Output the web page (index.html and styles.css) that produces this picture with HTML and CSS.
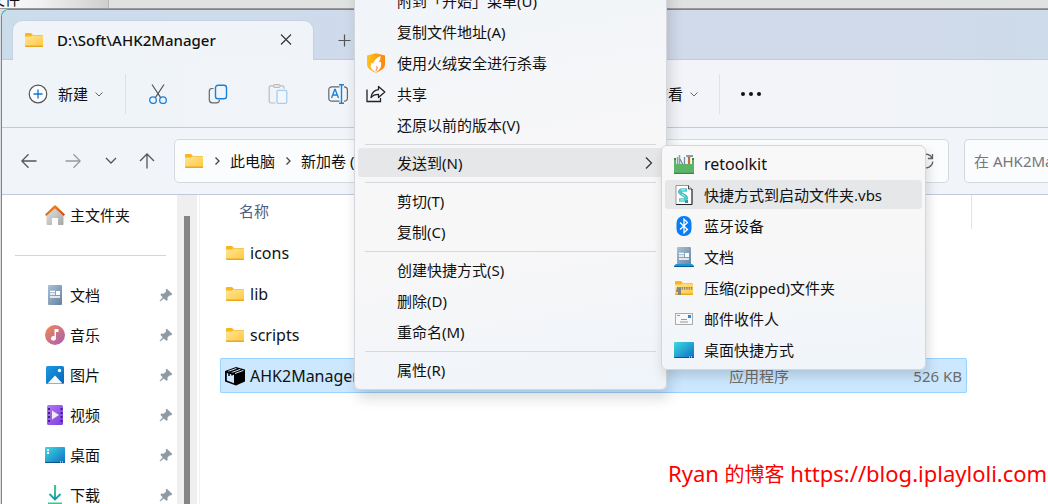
FILE: index.html
```html
<!DOCTYPE html>
<html lang="zh-CN">
<head>
<meta charset="utf-8">
<title>AHK2Manager</title>
<link rel="stylesheet" href="styles.css">
</head>
<body>
<svg class="defs" aria-hidden="true">
  <defs>
    <linearGradient id="gFolder" x1="0" y1="0" x2="1" y2="1"><stop offset="0" stop-color="#ffe59a"/><stop offset="1" stop-color="#ffc93e"/></linearGradient>
    <linearGradient id="gDoc" x1="0" y1="0" x2="1" y2="1"><stop offset="0" stop-color="#a9c1d9"/><stop offset="1" stop-color="#64819f"/></linearGradient>
    <linearGradient id="gDesk" x1="0" y1="0" x2="1" y2="1"><stop offset="0" stop-color="#3ddbe0"/><stop offset="1" stop-color="#0f6cc4"/></linearGradient>
    <linearGradient id="gMusic" x1="0" y1="0" x2="1" y2="1"><stop offset="0" stop-color="#f58a50"/><stop offset="1" stop-color="#a45cb8"/></linearGradient>
    <linearGradient id="gPic" x1="0" y1="0" x2="1" y2="1"><stop offset="0" stop-color="#189be6"/><stop offset="1" stop-color="#0a64b4"/></linearGradient>
    <linearGradient id="gVideo" x1="0" y1="0" x2="1" y2="1"><stop offset="0" stop-color="#b577f2"/><stop offset="1" stop-color="#7c3ee0"/></linearGradient>
    <linearGradient id="gHome" x1="0" y1="0" x2="1" y2="1"><stop offset="0" stop-color="#e4e4e4"/><stop offset="1" stop-color="#a6a6a6"/></linearGradient>
    <linearGradient id="gRoof" x1="0" y1="0" x2="1" y2="1"><stop offset="0" stop-color="#f79218"/><stop offset="1" stop-color="#d8410a"/></linearGradient>
    <linearGradient id="gDown" x1="0" y1="0" x2="0" y2="1"><stop offset="0" stop-color="#37c78c"/><stop offset="1" stop-color="#0f9aa0"/></linearGradient>
    <linearGradient id="gShield" x1="0" y1="0" x2="1" y2="0"><stop offset="0" stop-color="#ffc21c"/><stop offset="1" stop-color="#f98512"/></linearGradient>
    <symbol id="folder" viewBox="0 0 20 20">
      <path d="M1 4q0-1 1-1h5l2 2h-1v3H1z" fill="#f8b51c"/>
      <path d="M1 6.500h6L8.500 5H18q1 0 1 1v10q0 1-1 1H2q-1 0-1-1z" fill="url(#gFolder)"/>
      <path d="M1 16q0 1 1 1h16q1 0 1-1v-.4H1z" fill="#e8a820"/>
      <path d="M8.500 5H18q1 0 1 .6H8z" fill="#edb12b"/>
    </symbol>
    <symbol id="doc" viewBox="0 0 20 20">
      <rect x="3" width="14" height="20" rx="1" fill="url(#gDoc)"/>
      <path d="M5 6.500h5M5 9h5M5 12h10" stroke="#fff" stroke-width="1.300"/><rect x="11" y="6" width="4" height="4" fill="#fff"/>
    </symbol>
    <symbol id="desk" viewBox="0 0 20 20">
      <rect y="2" width="20" height="16" rx="1" fill="url(#gDesk)"/><path d="M0 17h20q0 1-1 1H1q-1 0-1-1z" fill="#075587"/>
      <path d="M15 17h1m1 0h1" stroke="#fff" stroke-width="1"/>
    </symbol>
    <symbol id="pin" viewBox="0 0 14 14">
      <path d="M7.800.7 13.300 6l-.8 1.300-2 .2-2 2 .1 2.700-1.300.6L4.700 10.500 1.200 13.500.5 12.900 3.700 9.300 1.500 6.900l.6-1.300 2.600.1 2.200-2 0-2.100z" fill="#8f9ba4"/>
    </symbol>
    <symbol id="down" viewBox="0 0 10 10"><path d="M1.500 3.500 5 7l3.500-3.500" fill="none" stroke="#666" stroke-width="1"/></symbol>
  </defs>
</svg>

<div class="desktop">
  <div class="backdrop">文件</div>

  <main class="window">
    <header class="titlebar">
      <div class="tab">
        <svg class="ico"><use href="#folder"/></svg>
        <span class="tab-name">D:\Soft\AHK2Manager</span>
        <button class="plain" aria-label="关闭"><svg class="s14" viewBox="0 0 14 14"><path d="m2 1.500 10 10M12 1.500l-10 10" stroke="#333" stroke-width="1.100"/></svg></button>
      </div>
      <button class="plain new-tab" aria-label="新标签"><svg class="s14" viewBox="0 0 14 14"><path d="M7.500 1.500v12M1.500 7.500h12" stroke="#555" stroke-width="1.200"/></svg></button>
    </header>

    <div class="toolbar">
      <button class="plain new">
        <svg class="ico" viewBox="0 0 20 20" fill="none"><circle cx="10" cy="10" r="8.800" stroke="#555" stroke-width="1.200" fill="#fafcfe"/><path d="M10 5.500v9M5.500 10h9" stroke="#0a74d0" stroke-width="1.300"/></svg>
        <span>新建</span>
        <svg class="s10"><use href="#down"/></svg>
      </button>
      <i class="rule"></i>
      <div class="tools">
        <button class="plain" aria-label="剪切"><svg class="ico" viewBox="0 0 20 20" fill="none"><path d="M4 0.500 12.800 13.800M16 .5 7.200 13.800" stroke="#555" stroke-width="1.200"/><circle cx="5" cy="16.200" r="3.300" stroke="#1a80d8" stroke-width="1.300"/><circle cx="15" cy="16.200" r="3.300" stroke="#1a80d8" stroke-width="1.300"/></svg></button>
        <button class="plain" aria-label="复制"><svg class="ico" viewBox="0 0 20 20" fill="none"><path d="M5.500 4.500H4Q1.300 4.500 1.300 7.500v8.300q0 3 3 3h4.200q2.800 0 3-2.800" stroke="#666" stroke-width="1.200"/><rect x="7.500" y="1.200" width="11" height="13.600" rx="2.600" stroke="#1a80d8" stroke-width="1.400" fill="#eef5fc"/></svg></button>
        <button class="plain" aria-label="粘贴"><svg class="ico" viewBox="0 0 20 20" fill="none"><path d="M5.500 1.800H3q-1.800 0-1.800 1.800v13.600Q1.200 19 3 19h4.500M12 1.800h2.200q1.800 0 1.800 1.800v1.200" stroke="#bbb" stroke-width="1.200"/><rect x="5.500" y=".6" width="6.500" height="2.800" rx="1.400" stroke="#bbb" stroke-width="1.100"/><rect x="9" y="6.300" width="9.800" height="13" rx="1.600" stroke="#a4cdef" stroke-width="1.300" fill="#f1f7fd"/></svg></button>
        <button class="plain" aria-label="重命名"><svg class="ico" viewBox="0 0 20 20" fill="none"><path d="M11.500 2.800H4Q.8 2.800.8 6v8q0 3.200 3.200 3.200h7.500M16 2.800q3.400 0 3.400 3.200v8q0 3.200-3.400 3.200" stroke="#666" stroke-width="1.200"/><path d="m3.500 14 3.300-8.500h.4L10.500 14M4.700 11h4.600" stroke="#1a80d8" stroke-width="1.300"/><path d="M11 .7h5M11 19.300h5M13.500.7v18.600" stroke="#1a80d8" stroke-width="1.400"/></svg></button>
      </div>
      <button class="plain view"><span>查看</span><svg class="s10"><use href="#down"/></svg></button>
      <i class="rule"></i>
      <button class="plain more" aria-label="更多"><svg class="ico" viewBox="0 0 20 20" fill="#111"><circle cx="2" cy="10" r="2"/><circle cx="10" cy="10" r="2"/><circle cx="18" cy="10" r="2"/></svg></button>
    </div>

    <nav class="navbar">
      <button class="plain" aria-label="后退"><svg class="s16" viewBox="0 0 16 16" fill="none" stroke="#555" stroke-width="1.300"><path d="M15.500 8H1M7.500 1.300.8 8l6.700 6.700"/></svg></button>
      <button class="plain" aria-label="前进"><svg class="s16" viewBox="0 0 16 16" fill="none" stroke="#999" stroke-width="1.300"><path d="M.5 8H15M8.500 1.300 15.200 8l-6.700 6.700"/></svg></button>
      <button class="plain recent" aria-label="最近"><svg class="s12" viewBox="0 0 12 12" fill="none" stroke="#555" stroke-width="1.300"><path d="m1 3 5 5 5-5"/></svg></button>
      <button class="plain" aria-label="上移"><svg class="s16" viewBox="0 0 16 16" fill="none" stroke="#555" stroke-width="1.300"><path d="M8 15.500V1M1 8l7-7 7 7"/></svg></button>
      <div class="address">
        <svg class="ico"><use href="#folder"/></svg>
        <svg class="s10" viewBox="0 0 10 10"><path d="m3.500 1.500 3.500 3.500-3.500 3.500" fill="none" stroke="#444" stroke-width="1.300"/></svg>
        <a href="#">此电脑</a>
        <svg class="s10" viewBox="0 0 10 10"><path d="m3.500 1.500 3.500 3.500-3.500 3.500" fill="none" stroke="#444" stroke-width="1.300"/></svg>
        <a href="#">新加卷 (</a>
        <button class="plain refresh" aria-label="刷新"><svg class="s16" viewBox="0 0 16 16" fill="none" stroke="#666" stroke-width="1.300"><path d="M14.500 1v4.500H10M14.300 5.500A6.800 6.800 0 1 0 14.800 8.500"/></svg></button>
      </div>
      <input class="search" type="text" aria-label="搜索" placeholder="在 AHK2Manager">
    </nav>

    <div class="content">
      <aside class="sidebar">
        <ul class="places">
          <li><svg class="ico" viewBox="0 0 20 20"><path d="M1.500 9 10 2l8.500 7v10q0 1-1 1H13v-7H7v7H2.500q-1 0-1-1z" fill="url(#gHome)"/><path d="M0 9.500 9 .8q1-.9 2 0l9 8.700-1.300 1.500L10 3.200 1.300 11z" fill="url(#gRoof)"/></svg><a href="#">主文件夹</a></li>
          <li><hr></li>
          <li><svg class="ico"><use href="#doc"/></svg><a href="#">文档</a><svg class="s14"><use href="#pin"/></svg></li>
          <li><svg class="ico" viewBox="0 0 20 20"><circle cx="10" cy="10" r="10" fill="url(#gMusic)"/><path d="M10 4h3.500v3H11v6.300a2.500 2.300 0 1 1-1.500-2.100V4z" fill="#fff"/></svg><a href="#">音乐</a><svg class="s14"><use href="#pin"/></svg></li>
          <li><svg class="ico" viewBox="0 0 20 20"><rect x="1" y="1" width="18" height="18" rx="1.500" fill="url(#gPic)"/><path d="M2.500 18.500 10 10.500l7.500 8z" fill="#f6faff"/><circle cx="14.500" cy="5.500" r="1.700" fill="#fff"/></svg><a href="#">图片</a><svg class="s14"><use href="#pin"/></svg></li>
          <li><svg class="ico" viewBox="0 0 20 20"><rect x="2" width="16" height="20" rx="1.500" fill="url(#gVideo)"/><path d="M4 3v15M16.500 3v15" stroke="#41208a" stroke-width="2" stroke-dasharray="2 2"/><path d="m7 5.500 7 4.500-7 4.500z" fill="#eee"/></svg><a href="#">视频</a><svg class="s14"><use href="#pin"/></svg></li>
          <li><svg class="ico" viewBox="0 0 20 20"><use href="#desk" width="20" height="20"/><path d="M2 4h2v2H2zM2 7h2v2H2z" fill="#fff"/></svg><a href="#">桌面</a><svg class="s14"><use href="#pin"/></svg></li>
          <li><svg class="ico" viewBox="0 0 20 20" fill="none"><path d="M10 0v14M4.500 9l5.500 5.500L15.500 9" stroke="url(#gDown)" stroke-width="1.800"/><path d="M10.200 0v6M3 18.500h14" stroke="#37c78c" stroke-width="1.800"/></svg><a href="#">下载</a><svg class="s14"><use href="#pin"/></svg></li>
        </ul>
        <div class="track"><div class="thumb"></div></div>
      </aside>

      <section class="files">
        <table>
          <thead><tr><th class="c-name">名称</th><th class="c-type"></th><th class="c-size"></th><th class="c-end"></th></tr></thead>
          <tbody>
            <tr><td><span class="file"><svg class="ico"><use href="#folder"/></svg>icons</span></td><td></td><td></td></tr>
            <tr><td><span class="file"><svg class="ico"><use href="#folder"/></svg>lib</span></td><td></td><td></td></tr>
            <tr><td><span class="file"><svg class="ico"><use href="#folder"/></svg>scripts</span></td><td></td><td></td></tr>
            <tr class="selected"><td><span class="file"><svg class="ico" viewBox="0 0 20 20"><path d="M0 5 11 1l9 2.500v12L11 19.500 0 15.500z" fill="#000"/><path d="M1.800 7 9 9v8.300l-7.200-2.800z" fill="#cce8ff"/><path d="M3 5.500 11.500 2.400M6.500 6.600 15.500 3.300M10 7.500 18.500 4.400" stroke="#cce8ff" stroke-width="1"/><path d="M4 5.500v4.500M7 6.500v3" stroke="#000" stroke-width="1.500"/></svg>AHK2Manager</span></td><td class="meta">应用程序</td><td class="meta size">526 KB</td></tr>
          </tbody>
        </table>
      </section>
    </div>
  </main>

  <p class="watermark">Ryan <span>的博客</span> https://blog.iplayloli.com</p>

  <div class="menu context" role="menu">
    <button role="menuitem">附到「开始」菜单(U)</button>
    <button role="menuitem">复制文件地址(A)</button>
    <button role="menuitem"><svg class="ico" viewBox="0 0 20 20"><path d="M1 2.500 10 .3l9 2.200v9q0 5-9 8.300Q1 16.500 1 11.500z" fill="url(#gShield)"/><path d="M14.500 3q.5 3.500-2 6.500l2-1q3 6-4.500 10.800Q2.500 16 5.500 9.500l1.700 1.300Q8 6 14.500 3z" fill="#fff"/><path d="M10.500 13q1.500 2.500-.7 5" fill="none" stroke="#f5a070" stroke-width="1.200"/></svg>使用火绒安全进行杀毒</button>
    <button role="menuitem"><svg class="ico" viewBox="0 0 20 20" fill="none" stroke="#222" stroke-width="1.300"><path d="M1 5.500V17.500h13.500v-3.500"/><path d="M12.500 2.500 18.800 8l-6.300 5.500v-3.200q-5 0-7.500 3.200 1-7 7.500-7.800z" stroke-linejoin="round"/></svg>共享</button>
    <button role="menuitem">还原以前的版本(V)</button>
    <hr>
    <button role="menuitem" class="active">发送到(N)<svg class="arrow" viewBox="0 0 14 14"><path d="m5 1.500 5.500 5.500L5 12.500" fill="none" stroke="#333" stroke-width="1.200"/></svg></button>
    <hr>
    <button role="menuitem">剪切(T)</button>
    <button role="menuitem">复制(C)</button>
    <hr>
    <button role="menuitem">创建快捷方式(S)</button>
    <button role="menuitem">删除(D)</button>
    <button role="menuitem">重命名(M)</button>
    <hr>
    <button role="menuitem">属性(R)</button>
  </div>

  <div class="menu submenu" role="menu">
    <button role="menuitem" class="latin"><svg class="ico" viewBox="0 0 20 20"><path d="M3.500 3v9M5.500 1v10" stroke="#8d9dad" stroke-width="1.500"/><path d="m6 5 3 6M10.500 3v8" stroke="#6b8aa5" stroke-width="1.300"/><path d="M12 1h7v2h-2l-2 1-3-1.500z" fill="#8b9aa6"/><path d="M15 3v8" stroke="#d2682c" stroke-width="2.200"/><path d="M0 4h2v6h16V4h2v16H0z" fill="#5cb468"/><path d="M0 4h2v2H0zM18 4h2v2h-2zM0 18.800h20V20H0z" fill="#338c43"/></svg>retoolkit</button>
    <button role="menuitem" class="active"><svg class="ico" viewBox="0 0 20 20"><path d="M2 .5h12.500L18 4v15.500H2z" fill="#fff" stroke="#999"/><path d="M18 4v15.500H2" fill="none" stroke="#222"/><path d="M14.500.5V4H18" fill="#ddd" stroke="#444"/><path d="M13 5H7q-2.500 1.500 0 3.500l4.500 3q2 2.500-1 3.500H5M11 16.500h3" fill="none" stroke="#4a8a90" stroke-width="3.200"/><path d="M13 5H7q-2.500 1.500 0 3.500l4.500 3q2 2.500-1 3.500H5" fill="none" stroke="#39d6da" stroke-width="2.200"/><path d="M7 4.800h4M8 9.300l3 2M6 15h4" stroke="#bff" stroke-width=".8"/></svg>快捷方式到启动文件夹.vbs</button>
    <button role="menuitem"><svg class="ico" viewBox="0 0 20 20"><rect x="2.500" width="15" height="20" rx="7" fill="#0a7df5"/><path d="m6 6.500 7.500 7L10 16.800V3.200l3.500 3.300L6 13.500" fill="none" stroke="#fff" stroke-width="1.300"/></svg>蓝牙设备</button>
    <button role="menuitem"><svg class="ico" viewBox="0 0 20 20"><use href="#doc" width="20" height="20"/><path d="M2 17h16l2 2H0z" fill="#1598dc"/><path d="M0 19h20v1H0z" fill="#075a96"/></svg>文档</button>
    <button role="menuitem"><svg class="ico" viewBox="0 0 20 20"><use href="#folder" width="20" height="20"/><path d="M3 10.500h16" stroke="#77643b" stroke-width="2.600" stroke-dasharray="1.500 .8"/><path d="M3 11h16" stroke="#d9d6ca" stroke-width=".8"/><path d="M3 9.500h4V17H4v-3H2z" fill="#85867f"/></svg>压缩(zipped)文件夹</button>
    <button role="menuitem"><svg class="ico" viewBox="0 0 20 20"><rect x="1.500" y="4.500" width="17" height="11" fill="#f8f8f8" stroke="#aaa"/><path d="M3 6.500h3M7 10.500h6M6 13h8" stroke="#999"/><rect x="14" y="6" width="3" height="3" fill="#2585e5"/></svg>邮件收件人</button>
    <button role="menuitem"><svg class="ico"><use href="#desk"/></svg>桌面快捷方式</button>
  </div>
</div>
</body>
</html>
```
FILE: styles.css
```css
* { box-sizing: border-box; }

body {
  margin: 0;
  font: 15px/20px "Noto Sans", "Noto Sans CJK SC", sans-serif;
  color: #111;
}

.defs { position: absolute; width: 0; height: 0; }

button {
  font: inherit;
  color: inherit;
  border: 0;
  padding: 0;
  background: none;
}

a { color: inherit; text-decoration: none; }

.ico { width: 20px; height: 20px; flex: none; display: block; }
.s10 { width: 10px; height: 10px; flex: none; display: block; }
.s12 { width: 12px; height: 12px; flex: none; display: block; }
.s14 { width: 14px; height: 14px; flex: none; display: block; }
.s16 { width: 16px; height: 16px; flex: none; display: block; }

.plain { display: flex; align-items: center; flex: none; }

.desktop {
  position: relative;
  height: 100vh;
  overflow: hidden;
  display: flex;
  flex-direction: column;
  background: #dcdfe2;
  padding-left: 1px;
}

.backdrop {
  flex: none;
  height: 9px;
  display: flex;
  align-items: flex-end;
  overflow: hidden;
  margin-left: -11px;
  background: linear-gradient(90deg, #fbfbfb 0, #f1f1f1 50px, #cfcfcf 118px, #909090 118px, #e0e1e1 119px);
  box-shadow: inset 0 -4px 0 -3px #999;
}

.window {
  flex: 1;
  min-height: 0;
  display: flex;
  flex-direction: column;
  border: solid #12afbd;
  border-width: 1px 0 0 1px;
  border-radius: 8px 0 0 0;
  background: #fff;
  overflow: hidden;
}

.titlebar {
  flex: none;
  height: 50px;
  display: flex;
  align-items: flex-end;
  padding-left: 11px;
  background: linear-gradient(90deg, #cbdceb, #d1daeb 50%, #d1daeb 85%, #cddbea);
  border-bottom: 1px solid #c2cce0;
}

.tab {
  width: 300px;
  height: 39px;
  margin-bottom: -1px;
  padding: 0 20px 1px 11px;
  display: flex;
  align-items: center;
  background: #f0f4f9;
  border-radius: 9px 9px 0 0;
  box-shadow: 0 0 0 1px #c4d2e4;
}

.tab-name { flex: 1; margin-left: 13px; font-weight: 500; }

.new-tab { height: 38px; padding-left: 24px; }

.toolbar {
  flex: none;
  height: 68px;
  display: flex;
  align-items: center;
  padding-left: 26px;
  background: linear-gradient(90deg, #eff4f9, #f2f4f9 50%, #f2f4f9 85%, #eff4f9);
  border-bottom: 1px solid #bfcadb;
  position: relative;
}

.new { gap: 6px; width: 97px; }
.new span { margin-left: 4px; }
.rule { width: 1px; height: 40px; background: #dde2ea; flex: none; }
.tools { display: flex; gap: 40px; margin-left: 22px; }
.view { margin-left: 305px; width: 66px; gap: 6px; }
.more { margin-left: 21px; }

.navbar {
  flex: none;
  height: 67px;
  display: flex;
  align-items: center;
  padding-left: 19px;
  background: #f1f4f9;
  border-bottom: 1px solid #bfcadb;
}

.navbar > .plain { margin-right: 28px; }
.navbar > .plain + .plain { margin-right: 24px; }
.navbar > .recent + .plain { margin-right: 0; }
.navbar > .plain.recent { margin-right: 22px; }

.address {
  flex: 1;
  min-width: 0;
  height: 44px;
  margin-left: 19px;
  padding: 0 14px 0 9px;
  display: flex;
  align-items: center;
  gap: 8px;
  overflow: hidden;
  background: #fbfcfe;
  border: 1px solid #d5d9df;
  border-radius: 5px;
}

.address a { flex: none; white-space: nowrap; }
.refresh { margin-left: auto; }

.search {
  width: 84px;
  height: 44px;
  margin-left: 15px;
  padding: 0 0 0 9px;
  font: inherit;
  background: #fbfcfe;
  border: 1px solid #d5d9df;
  border-right: 0;
  border-radius: 5px 0 0 5px;
}

.search::placeholder { color: #777; opacity: 1; text-overflow: clip; }

.content { flex: 1; min-height: 0; display: flex; }

.sidebar {
  flex: none;
  width: 198px;
  display: flex;
  border-right: 1px solid #f3f3f3;
}

.places {
  flex: 1;
  margin: 0;
  padding: 0 4px 0 13px;
  list-style: none;
}

.places li {
  height: 40px;
  display: flex;
  align-items: center;
  padding-left: 30px;
  gap: 5px;
}

.places li:has(hr) { padding: 0 7px 0 0; }
.places hr { flex: 1; border: 0; height: 1px; margin: 0; background: #d4d4d4; }
.places a { flex: 1; }

.track { width: 20px; margin-right: 2px; padding: 21px 7px 0 7px; background: #efefef; display: flex; }
.thumb { flex: 1; background: #858585; }

.files { flex: 1; min-width: 0; padding-left: 20px; overflow: hidden; }

table {
  margin-top: -7px;
  border-spacing: 0 6px;
  table-layout: fixed;
  width: 752px;
}

th, td { padding: 0; height: 35px; text-align: left; font-weight: 400; }
th { color: #4d6082; }
.c-name { width: 504px; padding: 0 0 2px 19px; }
.c-end { width: 5px; border-right: 1px solid #e3e3e3; }
td:first-child { padding-left: 5px; }
.file { display: flex; align-items: center; gap: 5px; }
.meta { color: #6d6d6d; padding-left: 5px; }
.size { text-align: right; padding-right: 5px; }

.selected td { background: #cce8ff; border: solid #99d1ff; border-width: 1px 0; }
.selected td:first-child { border-left-width: 1px; padding-left: 4px; border-radius: 2px 0 0 2px; }
.selected td:last-child { border-right-width: 1px; padding-right: 4px; border-radius: 0 2px 2px 0; }

.file, .latin { font-size: 16px; }

.watermark {
  position: absolute;
  left: 668px;
  top: 459px;
  margin: 0;
  font: 22px/28px "Noto Sans", "Noto Sans CJK SC", sans-serif;
  color: #f00;
  white-space: nowrap;
}

.watermark span { font-size: 20px; }

.menu {
  position: absolute;
  display: flex;
  flex-direction: column;
  border: 1px solid #d3d6da;
  background: linear-gradient(170deg, #f0f4f9, #f7f7f8 45%, #f7f7f8 65%, #eff4fa);
}

.menu button {
  height: 29px;
  margin: 1px 3px;
  display: flex;
  align-items: center;
  gap: 10px;
  text-align: left;
  white-space: nowrap;
  border-radius: 3px;
}

.menu .active { background: #e6e7e8; }

.context {
  left: 354px;
  top: -20px;
  width: 313px;
  padding: 4px 0;
  border-radius: 6px;
  box-shadow: 3px 8px 14px rgba(0, 0, 0, .15);
}

.context button { padding-left: 39px; }
.context button:has(.ico) { padding-left: 8px; gap: 11px; }
.context hr { width: auto; height: 1px; margin: 4px 10px 2px; border: 0; background: #d5d8dc; }
.arrow { width: 14px; height: 14px; margin-left: auto; margin-right: 8px; }

.submenu {
  left: 661px;
  top: 145px;
  width: 265px;
  padding: 2px 0 4px;
  border-radius: 6px;
  background: linear-gradient(175deg, #f8f8f9, #f7f7f8 50%, #f0f5fa);
  box-shadow: 2px 6px 12px rgba(0, 0, 0, .15);
}

.submenu button { padding-left: 9px; }
```
